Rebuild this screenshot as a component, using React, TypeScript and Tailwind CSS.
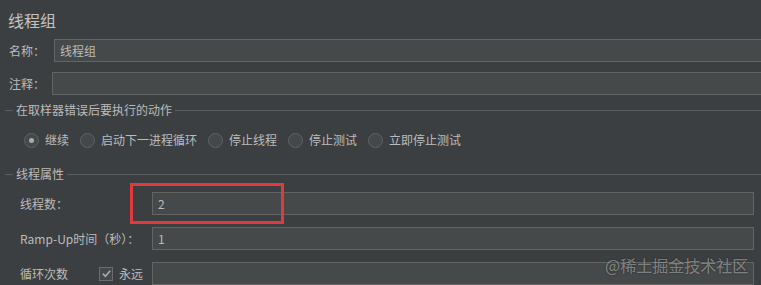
import React from "react";

const field =
  "h-[23px] bg-[#45494a] border border-[#646464] flex items-center pl-[5px] text-[#bbbbbb]";

function GroupTitle({ text }: { text: string }) {
  return (
    <div className="flex items-center h-[16px]">
      <div className="w-[8px] ml-[5px] h-px bg-[#5b5e60]" />
      <span className="px-[3px] text-[#bbbbbb]">{text}</span>
      <div className="flex-1 h-px bg-[#5b5e60]" />
    </div>
  );
}

function Radio({ label, checked }: { label: string; checked?: boolean }) {
  return (
    <div className="flex items-center gap-[6px]">
      <div className="w-[15px] h-[15px] rounded-full border border-[#5f6365] bg-[#43484a] flex items-center justify-center">
        {checked && <div className="w-[5px] h-[5px] rounded-full bg-[#a9acae]" />}
      </div>
      <span>{label}</span>
    </div>
  );
}

export default function App() {
  return (
    <div className="relative w-[761px] h-[285px] overflow-hidden bg-[#3c3f41] text-[#bbbbbb] text-[12px] font-['Microsoft_YaHei','Noto_Sans_CJK_SC',sans-serif]">
      <div className="h-[39px] flex items-center pl-[8px] text-[16px] text-[#c3c3c3]">线程组</div>

      <div className="flex items-center h-[23px]">
        <span className="w-[54px] pl-[9px]">名称：</span>
        <div className={`${field} flex-1 -mr-[4px]`}>线程组</div>
      </div>

      <div className="flex items-center h-[23px] mt-[10px]">
        <span className="w-[52px] pl-[9px]">注释：</span>
        <div className={`${field} flex-1 -mr-[4px]`} />
      </div>

      <div className="mt-[7px]">
        <GroupTitle text="在取样器错误后要执行的动作" />
      </div>

      <div className="mt-[12px] h-[20px] flex items-center pl-[24px] gap-[11px]">
        <Radio label="继续" checked />
        <Radio label="启动下一进程循环" />
        <Radio label="停止线程" />
        <Radio label="停止测试" />
        <Radio label="立即停止测试" />
      </div>

      <div className="mt-[16px]">
        <GroupTitle text="线程属性" />
      </div>

      <div className="relative flex items-center h-[23px] mt-[10px] mr-[7px]">
        <span className="w-[152px] pl-[20px]">线程数：</span>
        <div className={`${field} flex-1`}>2</div>
        <div className="absolute left-[130px] top-[-9px] w-[154px] h-[41px] border-[3px] border-[#e0393e]" />
      </div>

      <div className="flex items-center h-[23px] mt-[12px] mr-[7px]">
        <span className="w-[152px] pl-[20px]">Ramp-Up时间（秒）：</span>
        <div className={`${field} flex-1`}>1</div>
      </div>

      <div className="flex items-center h-[23px] mt-[12px] mr-[7px]">
        <span className="w-[99px] pl-[20px]">循环次数</span>
        <div className="w-[14px] h-[14px] border border-[#6a6d6f] bg-[#43484a] flex items-center justify-center">
          <svg width="11" height="11" viewBox="0 0 12 12" fill="none">
            <path d="M2 6.2 L4.8 9 L10 3" stroke="#a8abad" strokeWidth="1.8" />
          </svg>
        </div>
        <span className="ml-[6px] w-[33px]">永远</span>
        <div className={`${field} flex-1`} />
      </div>

      <div className="absolute left-[605px] top-[253px] text-[16px] text-white/40 [text-shadow:0_0_2px_rgba(0,0,0,0.5)] whitespace-nowrap">
        @稀土掘金技术社区
      </div>
    </div>
  );
}
